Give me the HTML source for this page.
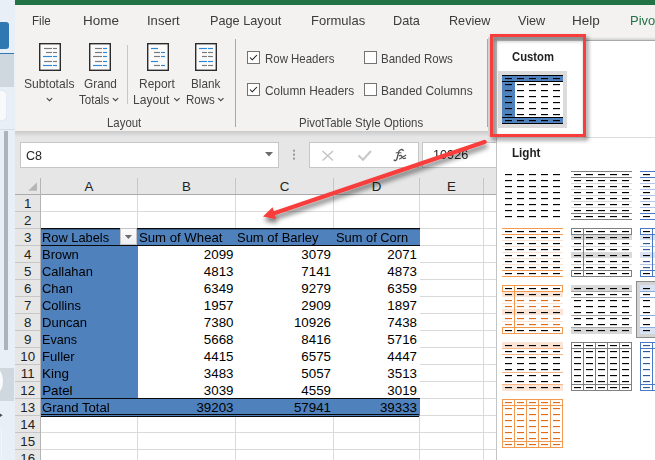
<!DOCTYPE html>
<html><head><meta charset="utf-8"><style>
html,body{margin:0;padding:0;}
body{width:655px;height:460px;overflow:hidden;position:relative;font-family:"Liberation Sans", sans-serif;background:#fff;}
</style></head><body>
<div style="position:absolute;left:0px;top:0px;width:15px;height:460px;background:#e8eff6"></div>
<div style="position:absolute;left:-4px;top:22px;width:13px;height:27px;background:#2f78b2;border-radius:3px"></div>
<div style="position:absolute;left:0px;top:52.5px;width:14px;height:1.5px;background:#2f78b2"></div>
<div style="position:absolute;left:0px;top:54px;width:14px;height:33px;background:#cfd8df"></div>
<div style="position:absolute;left:-6px;top:91px;width:12px;height:29px;background:#f7f9fb;border-radius:3px;box-shadow:0 0 1px #c0c8d0"></div>
<div style="position:absolute;left:0px;top:129px;width:15px;height:1px;background:#d5dde5"></div>
<div style="position:absolute;left:4px;top:131px;width:4px;height:219px;background:#aab4bc"></div>
<div style="position:absolute;left:0px;top:368px;width:14px;height:33px;background:#cfd8df"></div>
<div style="position:absolute;left:-10px;top:369px;width:13px;height:24px;background:#f7f9fb;border-radius:50%"></div>
<svg width="655" height="460" style="position:absolute;left:0;top:0"><polygon points="0,413.6 2.6,415.2 0,416.9" fill="#4a4a4a"/></svg>
<div style="position:absolute;left:1px;top:427px;width:1px;height:33px;background:#f3f6f9"></div>
<div style="position:absolute;left:15px;top:0px;width:640px;height:5px;background:#217346"></div>
<div style="position:absolute;left:15px;top:5px;width:640px;height:126px;background:#f3f2f1"></div>
<div style="position:absolute;left:15px;top:130.5px;width:640px;height:6px;background:linear-gradient(#c9c9c9,#e6e6e6)"></div>
<div style="position:absolute;left:31.98px;top:14.59px;font-size:12.6px;line-height:1;color:#3b3b3b;font-weight:400;white-space:nowrap;transform:scaleX(0.9211);transform-origin:0 0;">File</div>
<div style="position:absolute;left:83.13px;top:14.59px;font-size:12.6px;line-height:1;color:#3b3b3b;font-weight:400;white-space:nowrap;transform:scaleX(1.0719);transform-origin:0 0;">Home</div>
<div style="position:absolute;left:146.96px;top:14.59px;font-size:12.6px;line-height:1;color:#3b3b3b;font-weight:400;white-space:nowrap;transform:scaleX(1.0355);transform-origin:0 0;">Insert</div>
<div style="position:absolute;left:210.39px;top:14.59px;font-size:12.6px;line-height:1;color:#3b3b3b;font-weight:400;white-space:nowrap;transform:scaleX(1.0086);transform-origin:0 0;">Page Layout</div>
<div style="position:absolute;left:311.17px;top:14.59px;font-size:12.6px;line-height:1;color:#3b3b3b;font-weight:400;white-space:nowrap;transform:scaleX(1.0333);transform-origin:0 0;">Formulas</div>
<div style="position:absolute;left:393.19px;top:14.59px;font-size:12.6px;line-height:1;color:#3b3b3b;font-weight:400;white-space:nowrap;transform:scaleX(1.0115);transform-origin:0 0;">Data</div>
<div style="position:absolute;left:448.80px;top:14.59px;font-size:12.6px;line-height:1;color:#3b3b3b;font-weight:400;white-space:nowrap;transform:scaleX(1.0025);transform-origin:0 0;">Review</div>
<div style="position:absolute;left:517.80px;top:14.59px;font-size:12.6px;line-height:1;color:#3b3b3b;font-weight:400;white-space:nowrap;transform:scaleX(1.0074);transform-origin:0 0;">View</div>
<div style="position:absolute;left:571.82px;top:14.59px;font-size:12.6px;line-height:1;color:#3b3b3b;font-weight:400;white-space:nowrap;transform:scaleX(1.0760);transform-origin:0 0;">Help</div>
<div style="position:absolute;left:630.27px;top:14.59px;font-size:12.6px;line-height:1;color:#217346;font-weight:400;white-space:nowrap;transform:scaleX(1.0288);transform-origin:0 0;">PivotTable Analyze</div>
<svg width="655" height="460" style="position:absolute;left:0;top:0"><rect x="39" y="43" width="22" height="28" fill="#2b2b2b"/><rect x="40.4" y="44.4" width="19.2" height="25.2" fill="#fbfbfb"/><line x1="44" y1="48.5" x2="52" y2="48.5" stroke="#7a7a7a" stroke-width="1.15"/><line x1="53" y1="48.5" x2="57" y2="48.5" stroke="#7a7a7a" stroke-width="1.15"/><line x1="46" y1="52.5" x2="52" y2="52.5" stroke="#7a7a7a" stroke-width="1.15"/><line x1="53" y1="52.5" x2="57" y2="52.5" stroke="#7a7a7a" stroke-width="1.15"/><line x1="43" y1="56.5" x2="52" y2="56.5" stroke="#2b88d8" stroke-width="1.15"/><line x1="53" y1="56.5" x2="57" y2="56.5" stroke="#2b88d8" stroke-width="1.15"/><line x1="44" y1="61.5" x2="52" y2="61.5" stroke="#7a7a7a" stroke-width="1.15"/><line x1="53" y1="61.5" x2="57" y2="61.5" stroke="#7a7a7a" stroke-width="1.15"/><line x1="43" y1="65.5" x2="52" y2="65.5" stroke="#2b88d8" stroke-width="1.15"/><line x1="53" y1="65.5" x2="57" y2="65.5" stroke="#2b88d8" stroke-width="1.15"/><rect x="89" y="43" width="22" height="28" fill="#2b2b2b"/><rect x="90.4" y="44.4" width="19.2" height="25.2" fill="#fbfbfb"/><line x1="95" y1="48.5" x2="102" y2="48.5" stroke="#7a7a7a" stroke-width="1.15"/><line x1="103" y1="48.5" x2="107" y2="48.5" stroke="#2b88d8" stroke-width="1.15"/><line x1="95" y1="52.5" x2="102" y2="52.5" stroke="#7a7a7a" stroke-width="1.15"/><line x1="103" y1="52.5" x2="107" y2="52.5" stroke="#2b88d8" stroke-width="1.15"/><line x1="93" y1="56.5" x2="102" y2="56.5" stroke="#7a7a7a" stroke-width="1.15"/><line x1="103" y1="56.5" x2="107" y2="56.5" stroke="#2b88d8" stroke-width="1.15"/><line x1="95" y1="61.5" x2="102" y2="61.5" stroke="#7a7a7a" stroke-width="1.15"/><line x1="103" y1="61.5" x2="107" y2="61.5" stroke="#2b88d8" stroke-width="1.15"/><line x1="93" y1="65.5" x2="102" y2="65.5" stroke="#2b88d8" stroke-width="1.15"/><line x1="103" y1="65.5" x2="107" y2="65.5" stroke="#2b88d8" stroke-width="1.15"/><rect x="147" y="43" width="22" height="28" fill="#2b2b2b"/><rect x="148.4" y="44.4" width="19.2" height="25.2" fill="#fbfbfb"/><line x1="151" y1="48.5" x2="158" y2="48.5" stroke="#2b88d8" stroke-width="1.15"/><line x1="154" y1="52.5" x2="160" y2="52.5" stroke="#7a7a7a" stroke-width="1.15"/><line x1="161" y1="52.5" x2="165" y2="52.5" stroke="#2b88d8" stroke-width="1.15"/><line x1="154" y1="56.5" x2="160" y2="56.5" stroke="#7a7a7a" stroke-width="1.15"/><line x1="161" y1="56.5" x2="165" y2="56.5" stroke="#2b88d8" stroke-width="1.15"/><line x1="151" y1="61.5" x2="158" y2="61.5" stroke="#2b88d8" stroke-width="1.15"/><line x1="154" y1="65.5" x2="160" y2="65.5" stroke="#7a7a7a" stroke-width="1.15"/><line x1="161" y1="65.5" x2="165" y2="65.5" stroke="#2b88d8" stroke-width="1.15"/><rect x="195" y="43" width="22" height="28" fill="#2b2b2b"/><rect x="196.4" y="44.4" width="19.2" height="25.2" fill="#fbfbfb"/><line x1="199" y1="48.5" x2="207" y2="48.5" stroke="#2b88d8" stroke-width="1.15"/><line x1="208" y1="48.5" x2="213" y2="48.5" stroke="#2b88d8" stroke-width="1.15"/><line x1="202" y1="52.5" x2="207" y2="52.5" stroke="#7a7a7a" stroke-width="1.15"/><line x1="208" y1="52.5" x2="213" y2="52.5" stroke="#7a7a7a" stroke-width="1.15"/><line x1="202" y1="56.5" x2="207" y2="56.5" stroke="#7a7a7a" stroke-width="1.15"/><line x1="208" y1="56.5" x2="213" y2="56.5" stroke="#7a7a7a" stroke-width="1.15"/><line x1="199" y1="61.5" x2="207" y2="61.5" stroke="#2b88d8" stroke-width="1.15"/><line x1="208" y1="61.5" x2="213" y2="61.5" stroke="#2b88d8" stroke-width="1.15"/><line x1="202" y1="65.5" x2="207" y2="65.5" stroke="#7a7a7a" stroke-width="1.15"/><line x1="208" y1="65.5" x2="213" y2="65.5" stroke="#7a7a7a" stroke-width="1.15"/></svg>
<div style="position:absolute;left:24.04px;top:77.59px;font-size:12.6px;line-height:1;color:#444;font-weight:400;white-space:nowrap;transform:scaleX(0.9608);transform-origin:0 0;">Subtotals</div>
<svg width="655" height="460" style="position:absolute;left:0;top:0"><polyline points="46.8,98.10000000000001 49.5,100.7 52.2,98.10000000000001" fill="none" stroke="#444" stroke-width="1.1"/></svg>
<div style="position:absolute;left:83.56px;top:77.59px;font-size:12.6px;line-height:1;color:#444;font-weight:400;white-space:nowrap;transform:scaleX(0.9394);transform-origin:0 0;">Grand</div>
<div style="position:absolute;left:79.20px;top:94.09px;font-size:12.6px;line-height:1;color:#444;font-weight:400;white-space:nowrap;transform:scaleX(0.9187);transform-origin:0 0;">Totals</div>
<svg width="655" height="460" style="position:absolute;left:0;top:0"><polyline points="112.8,98.10000000000001 115.5,100.7 118.2,98.10000000000001" fill="none" stroke="#444" stroke-width="1.1"/></svg>
<div style="position:absolute;left:139.05px;top:77.59px;font-size:12.6px;line-height:1;color:#444;font-weight:400;white-space:nowrap;transform:scaleX(0.9486);transform-origin:0 0;">Report</div>
<div style="position:absolute;left:133.34px;top:94.09px;font-size:12.6px;line-height:1;color:#444;font-weight:400;white-space:nowrap;transform:scaleX(0.9595);transform-origin:0 0;">Layout</div>
<svg width="655" height="460" style="position:absolute;left:0;top:0"><polyline points="174.20000000000002,98.10000000000001 176.9,100.7 179.6,98.10000000000001" fill="none" stroke="#444" stroke-width="1.1"/></svg>
<div style="position:absolute;left:190.67px;top:77.59px;font-size:12.6px;line-height:1;color:#444;font-weight:400;white-space:nowrap;transform:scaleX(0.9300);transform-origin:0 0;">Blank</div>
<div style="position:absolute;left:185.69px;top:94.09px;font-size:12.6px;line-height:1;color:#444;font-weight:400;white-space:nowrap;transform:scaleX(0.9133);transform-origin:0 0;">Rows</div>
<svg width="655" height="460" style="position:absolute;left:0;top:0"><polyline points="218.10000000000002,98.10000000000001 220.8,100.7 223.5,98.10000000000001" fill="none" stroke="#444" stroke-width="1.1"/></svg>
<div style="position:absolute;left:107.49px;top:116.69px;font-size:12.6px;line-height:1;color:#444;font-weight:400;white-space:nowrap;transform:scaleX(0.9054);transform-origin:0 0;">Layout</div>
<div style="position:absolute;left:127px;top:45px;width:1px;height:59px;background:#c6c6c6"></div>
<div style="position:absolute;left:235px;top:39px;width:1px;height:88px;background:#a8a8a8"></div>
<div style="position:absolute;left:487px;top:39px;width:1px;height:88px;background:#a8a8a8"></div>
<svg width="655" height="460" style="position:absolute;left:0;top:0"><rect x="247.5" y="51.5" width="12" height="12" fill="#fdfdfd" stroke="#737373" stroke-width="1"/><polyline points="250,57.5 252.3,59.8 257,55" fill="none" stroke="#1e1e1e" stroke-width="1.05"/><rect x="247.5" y="83.5" width="12" height="12" fill="#fdfdfd" stroke="#737373" stroke-width="1"/><polyline points="250,89.5 252.3,91.8 257,87" fill="none" stroke="#1e1e1e" stroke-width="1.05"/><rect x="364.5" y="51.5" width="12" height="12" fill="#fdfdfd" stroke="#737373" stroke-width="1"/><rect x="364.5" y="83.5" width="12" height="12" fill="#fdfdfd" stroke="#737373" stroke-width="1"/></svg>
<div style="position:absolute;left:264.59px;top:52.59px;font-size:12.6px;line-height:1;color:#444;font-weight:400;white-space:nowrap;transform:scaleX(0.9093);transform-origin:0 0;">Row Headers</div>
<div style="position:absolute;left:264.66px;top:85.19px;font-size:12.6px;line-height:1;color:#444;font-weight:400;white-space:nowrap;transform:scaleX(0.9441);transform-origin:0 0;">Column Headers</div>
<div style="position:absolute;left:381.48px;top:52.59px;font-size:12.6px;line-height:1;color:#444;font-weight:400;white-space:nowrap;transform:scaleX(0.9156);transform-origin:0 0;">Banded Rows</div>
<div style="position:absolute;left:381.45px;top:85.19px;font-size:12.6px;line-height:1;color:#444;font-weight:400;white-space:nowrap;transform:scaleX(0.9484);transform-origin:0 0;">Banded Columns</div>
<div style="position:absolute;left:298.59px;top:116.69px;font-size:12.6px;line-height:1;color:#444;font-weight:400;white-space:nowrap;transform:scaleX(0.9096);transform-origin:0 0;">PivotTable Style Options</div>
<div style="position:absolute;left:15px;top:136.5px;width:640px;height:42px;background:#e6e6e6"></div>
<div style="position:absolute;left:20px;top:142px;width:259px;height:25.5px;background:#fff;box-sizing:border-box;border:1px solid #c6c6c6"></div>
<div style="position:absolute;left:26.22px;top:149.62px;font-size:12.8px;line-height:1;color:#262626;font-weight:400;white-space:nowrap;transform:scaleX(0.9800);transform-origin:0 0;">C8</div>
<svg width="655" height="460" style="position:absolute;left:0;top:0"><polygon points="265,152 273,152 269,156.5" fill="#6b6b6b"/><rect x="293" y="149.7" width="2" height="2" fill="#9a9a9a"/><rect x="293" y="153.6" width="2" height="2" fill="#9a9a9a"/><rect x="293" y="157.6" width="2" height="2" fill="#9a9a9a"/></svg>
<div style="position:absolute;left:309px;top:142px;width:110px;height:25.5px;background:#fff;box-sizing:border-box;border:1px solid #c6c6c6"></div>
<div style="position:absolute;left:422px;top:142px;width:75px;height:25.5px;background:#fff;box-sizing:border-box;border:1px solid #c6c6c6"></div>
<svg width="655" height="460" style="position:absolute;left:0;top:0"><path d="M322.5,151 L333,160.5 M333,151 L322.5,160.5" stroke="#c4c4c4" stroke-width="1.5"/><polyline points="358.5,155.5 363,159.8 371,151" fill="none" stroke="#c8c8c8" stroke-width="2.2"/><g fill="none" stroke="#555" stroke-linecap="round"><path d="M403.2,150.4 C402,149 399.6,149.2 398.8,151.8 L397,158.6 C396.4,160.6 395.2,160.9 394.2,160.1" stroke-width="1.4"/><path d="M396.2,152.7 L401,152.7" stroke-width="1.1"/><path d="M399.4,155.6 C401.4,154.9 402,156.2 402.5,157.4 C403,158.7 404,158.8 405.6,158.1" stroke-width="1.2"/><path d="M405.8,155.3 L399.6,158.9" stroke-width="1.2"/></g></svg>
<div style="position:absolute;left:433.39px;top:149.39px;font-size:12.6px;line-height:1;color:#262626;font-weight:400;white-space:nowrap;transform:scaleX(1.0059);transform-origin:0 0;">10926</div>
<div style="position:absolute;left:15px;top:178px;width:640px;height:16px;background:#e6e6e6"></div>
<div style="position:absolute;left:15px;top:195px;width:25px;height:265px;background:#e6e6e6"></div>
<div style="position:absolute;left:41px;top:195px;width:614px;height:265px;background:#fff"></div>
<svg width="655" height="460" style="position:absolute;left:0;top:0"><rect x="41" y="211" width="614" height="1" fill="#dadada"/><rect x="15" y="211" width="25" height="1" fill="#c6c6c6"/><rect x="41" y="228" width="614" height="1" fill="#dadada"/><rect x="15" y="228" width="25" height="1" fill="#c6c6c6"/><rect x="41" y="245" width="614" height="1" fill="#dadada"/><rect x="15" y="245" width="25" height="1" fill="#c6c6c6"/><rect x="41" y="262" width="614" height="1" fill="#dadada"/><rect x="15" y="262" width="25" height="1" fill="#c6c6c6"/><rect x="41" y="279" width="614" height="1" fill="#dadada"/><rect x="15" y="279" width="25" height="1" fill="#c6c6c6"/><rect x="41" y="296" width="614" height="1" fill="#dadada"/><rect x="15" y="296" width="25" height="1" fill="#c6c6c6"/><rect x="41" y="313" width="614" height="1" fill="#dadada"/><rect x="15" y="313" width="25" height="1" fill="#c6c6c6"/><rect x="41" y="330" width="614" height="1" fill="#dadada"/><rect x="15" y="330" width="25" height="1" fill="#c6c6c6"/><rect x="41" y="347" width="614" height="1" fill="#dadada"/><rect x="15" y="347" width="25" height="1" fill="#c6c6c6"/><rect x="41" y="364" width="614" height="1" fill="#dadada"/><rect x="15" y="364" width="25" height="1" fill="#c6c6c6"/><rect x="41" y="381" width="614" height="1" fill="#dadada"/><rect x="15" y="381" width="25" height="1" fill="#c6c6c6"/><rect x="41" y="398" width="614" height="1" fill="#dadada"/><rect x="15" y="398" width="25" height="1" fill="#c6c6c6"/><rect x="41" y="415" width="614" height="1" fill="#dadada"/><rect x="15" y="415" width="25" height="1" fill="#c6c6c6"/><rect x="41" y="432" width="614" height="1" fill="#dadada"/><rect x="15" y="432" width="25" height="1" fill="#c6c6c6"/><rect x="41" y="449" width="614" height="1" fill="#dadada"/><rect x="15" y="449" width="25" height="1" fill="#c6c6c6"/><rect x="41" y="466" width="614" height="1" fill="#dadada"/><rect x="15" y="466" width="25" height="1" fill="#c6c6c6"/><rect x="137" y="195" width="1" height="265" fill="#dadada"/><rect x="235" y="195" width="1" height="265" fill="#dadada"/><rect x="333" y="195" width="1" height="265" fill="#dadada"/><rect x="419" y="195" width="1" height="265" fill="#dadada"/><rect x="483" y="195" width="1" height="265" fill="#dadada"/><rect x="560" y="195" width="1" height="265" fill="#dadada"/><rect x="137" y="178" width="1" height="16" fill="#c6c6c6"/><rect x="235" y="178" width="1" height="16" fill="#c6c6c6"/><rect x="333" y="178" width="1" height="16" fill="#c6c6c6"/><rect x="419" y="178" width="1" height="16" fill="#c6c6c6"/><rect x="483" y="178" width="1" height="16" fill="#c6c6c6"/><rect x="560" y="178" width="1" height="16" fill="#c6c6c6"/><rect x="15" y="194" width="640" height="1" fill="#ababab"/><rect x="40" y="178" width="1" height="282" fill="#b4b4b4"/><polygon points="28.2,190.8 37,190.8 37,182.2" fill="#b6b6b6"/></svg>
<div style="position:absolute;left:-11.0px;width:200px;top:179.59px;font-size:13.3px;line-height:1;color:#222;font-weight:400;white-space:nowrap;text-align:center;">A</div>
<div style="position:absolute;left:86.5px;width:200px;top:179.59px;font-size:13.3px;line-height:1;color:#222;font-weight:400;white-space:nowrap;text-align:center;">B</div>
<div style="position:absolute;left:184.5px;width:200px;top:179.59px;font-size:13.3px;line-height:1;color:#222;font-weight:400;white-space:nowrap;text-align:center;">C</div>
<div style="position:absolute;left:276.5px;width:200px;top:179.59px;font-size:13.3px;line-height:1;color:#222;font-weight:400;white-space:nowrap;text-align:center;">D</div>
<div style="position:absolute;left:351.5px;width:200px;top:179.59px;font-size:13.3px;line-height:1;color:#222;font-weight:400;white-space:nowrap;text-align:center;">E</div>
<div style="position:absolute;left:-72.3px;width:200px;top:197.29px;font-size:13.3px;line-height:1;color:#222;font-weight:400;white-space:nowrap;text-align:center;">1</div>
<div style="position:absolute;left:-72.3px;width:200px;top:214.29px;font-size:13.3px;line-height:1;color:#222;font-weight:400;white-space:nowrap;text-align:center;">2</div>
<div style="position:absolute;left:-72.3px;width:200px;top:231.29px;font-size:13.3px;line-height:1;color:#222;font-weight:400;white-space:nowrap;text-align:center;">3</div>
<div style="position:absolute;left:-72.3px;width:200px;top:248.30px;font-size:13.3px;line-height:1;color:#222;font-weight:400;white-space:nowrap;text-align:center;">4</div>
<div style="position:absolute;left:-72.3px;width:200px;top:265.30px;font-size:13.3px;line-height:1;color:#222;font-weight:400;white-space:nowrap;text-align:center;">5</div>
<div style="position:absolute;left:-72.3px;width:200px;top:282.30px;font-size:13.3px;line-height:1;color:#222;font-weight:400;white-space:nowrap;text-align:center;">6</div>
<div style="position:absolute;left:-72.3px;width:200px;top:299.30px;font-size:13.3px;line-height:1;color:#222;font-weight:400;white-space:nowrap;text-align:center;">7</div>
<div style="position:absolute;left:-72.3px;width:200px;top:316.30px;font-size:13.3px;line-height:1;color:#222;font-weight:400;white-space:nowrap;text-align:center;">8</div>
<div style="position:absolute;left:-72.3px;width:200px;top:333.30px;font-size:13.3px;line-height:1;color:#222;font-weight:400;white-space:nowrap;text-align:center;">9</div>
<div style="position:absolute;left:-72.3px;width:200px;top:350.30px;font-size:13.3px;line-height:1;color:#222;font-weight:400;white-space:nowrap;text-align:center;">10</div>
<div style="position:absolute;left:-72.3px;width:200px;top:367.30px;font-size:13.3px;line-height:1;color:#222;font-weight:400;white-space:nowrap;text-align:center;">11</div>
<div style="position:absolute;left:-72.3px;width:200px;top:384.30px;font-size:13.3px;line-height:1;color:#222;font-weight:400;white-space:nowrap;text-align:center;">12</div>
<div style="position:absolute;left:-72.3px;width:200px;top:401.30px;font-size:13.3px;line-height:1;color:#222;font-weight:400;white-space:nowrap;text-align:center;">13</div>
<div style="position:absolute;left:-72.3px;width:200px;top:418.30px;font-size:13.3px;line-height:1;color:#222;font-weight:400;white-space:nowrap;text-align:center;">14</div>
<div style="position:absolute;left:-72.3px;width:200px;top:435.30px;font-size:13.3px;line-height:1;color:#222;font-weight:400;white-space:nowrap;text-align:center;">15</div>
<div style="position:absolute;left:-72.3px;width:200px;top:452.30px;font-size:13.3px;line-height:1;color:#222;font-weight:400;white-space:nowrap;text-align:center;">16</div>
<svg width="655" height="460" style="position:absolute;left:0;top:0"><rect x="41" y="228" width="379" height="17" fill="#4f81bd"/><rect x="41" y="245" width="97" height="153" fill="#4f81bd"/><rect x="41" y="398" width="379" height="18" fill="#4f81bd"/><rect x="41" y="228" width="379" height="1.3" fill="#0a0a0a"/><rect x="41" y="245" width="379" height="1" fill="#0a0a0a"/><rect x="138" y="246" width="282" height="152" fill="#fff"/><rect x="41" y="398" width="379" height="1" fill="#0a0a0a"/><rect x="41" y="414" width="378" height="1" fill="#0a0a0a"/><rect x="41" y="416" width="378" height="1" fill="#0a0a0a"/><rect x="419" y="416" width="1" height="1" fill="#dadada"/></svg>
<div style="position:absolute;left:120px;top:228px;width:17px;height:17px;box-sizing:border-box;border:1px solid #c4c4c4;background:linear-gradient(#fbfbfc,#eceff3)"></div>
<svg width="655" height="460" style="position:absolute;left:0;top:0"><polygon points="124.8,235 132,235 128.4,239.1" fill="#6b6b6b"/></svg>
<div style="position:absolute;left:42.44px;top:230.97px;font-size:13.33px;line-height:1;color:#000;font-weight:400;white-space:nowrap;transform:scaleX(0.9632);transform-origin:0 0;">Row Labels</div>
<div style="position:absolute;left:139.41px;top:230.97px;font-size:13.33px;line-height:1;color:#000;font-weight:400;white-space:nowrap;transform:scaleX(0.9880);transform-origin:0 0;">Sum of Wheat</div>
<div style="position:absolute;left:237.43px;top:230.97px;font-size:13.33px;line-height:1;color:#000;font-weight:400;white-space:nowrap;transform:scaleX(0.9735);transform-origin:0 0;">Sum of Barley</div>
<div style="position:absolute;left:335.54px;top:230.97px;font-size:13.33px;line-height:1;color:#000;font-weight:400;white-space:nowrap;transform:scaleX(0.9644);transform-origin:0 0;">Sum of Corn</div>
<div style="position:absolute;left:42.23px;top:248.17px;font-size:13.33px;line-height:1;color:#000;font-weight:400;white-space:nowrap;transform:scaleX(0.9750);transform-origin:0 0;">Brown</div>
<div style="position:absolute;right:421.5px;top:247.87px;font-size:13.33px;line-height:1;color:#000;font-weight:400;white-space:nowrap;text-align:right;">2099</div>
<div style="position:absolute;right:324px;top:247.87px;font-size:13.33px;line-height:1;color:#000;font-weight:400;white-space:nowrap;text-align:right;">3079</div>
<div style="position:absolute;right:238px;top:247.87px;font-size:13.33px;line-height:1;color:#000;font-weight:400;white-space:nowrap;text-align:right;">2071</div>
<div style="position:absolute;left:42.23px;top:265.17px;font-size:13.33px;line-height:1;color:#000;font-weight:400;white-space:nowrap;transform:scaleX(0.9667);transform-origin:0 0;">Callahan</div>
<div style="position:absolute;right:421.5px;top:264.87px;font-size:13.33px;line-height:1;color:#000;font-weight:400;white-space:nowrap;text-align:right;">4813</div>
<div style="position:absolute;right:324px;top:264.87px;font-size:13.33px;line-height:1;color:#000;font-weight:400;white-space:nowrap;text-align:right;">7141</div>
<div style="position:absolute;right:238px;top:264.87px;font-size:13.33px;line-height:1;color:#000;font-weight:400;white-space:nowrap;text-align:right;">4873</div>
<div style="position:absolute;left:42.23px;top:282.17px;font-size:13.33px;line-height:1;color:#000;font-weight:400;white-space:nowrap;transform:scaleX(0.9667);transform-origin:0 0;">Chan</div>
<div style="position:absolute;right:421.5px;top:281.87px;font-size:13.33px;line-height:1;color:#000;font-weight:400;white-space:nowrap;text-align:right;">6349</div>
<div style="position:absolute;right:324px;top:281.87px;font-size:13.33px;line-height:1;color:#000;font-weight:400;white-space:nowrap;text-align:right;">9279</div>
<div style="position:absolute;right:238px;top:281.87px;font-size:13.33px;line-height:1;color:#000;font-weight:400;white-space:nowrap;text-align:right;">6359</div>
<div style="position:absolute;left:42.23px;top:299.17px;font-size:13.33px;line-height:1;color:#000;font-weight:400;white-space:nowrap;transform:scaleX(0.9718);transform-origin:0 0;">Collins</div>
<div style="position:absolute;right:421.5px;top:298.87px;font-size:13.33px;line-height:1;color:#000;font-weight:400;white-space:nowrap;text-align:right;">1957</div>
<div style="position:absolute;right:324px;top:298.87px;font-size:13.33px;line-height:1;color:#000;font-weight:400;white-space:nowrap;text-align:right;">2909</div>
<div style="position:absolute;right:238px;top:298.87px;font-size:13.33px;line-height:1;color:#000;font-weight:400;white-space:nowrap;text-align:right;">1897</div>
<div style="position:absolute;left:42.22px;top:316.17px;font-size:13.33px;line-height:1;color:#000;font-weight:400;white-space:nowrap;transform:scaleX(0.9818);transform-origin:0 0;">Duncan</div>
<div style="position:absolute;right:421.5px;top:315.87px;font-size:13.33px;line-height:1;color:#000;font-weight:400;white-space:nowrap;text-align:right;">7380</div>
<div style="position:absolute;right:324px;top:315.87px;font-size:13.33px;line-height:1;color:#000;font-weight:400;white-space:nowrap;text-align:right;">10926</div>
<div style="position:absolute;right:238px;top:315.87px;font-size:13.33px;line-height:1;color:#000;font-weight:400;white-space:nowrap;text-align:right;">7438</div>
<div style="position:absolute;left:42.26px;top:333.17px;font-size:13.33px;line-height:1;color:#000;font-weight:400;white-space:nowrap;transform:scaleX(0.9444);transform-origin:0 0;">Evans</div>
<div style="position:absolute;right:421.5px;top:332.87px;font-size:13.33px;line-height:1;color:#000;font-weight:400;white-space:nowrap;text-align:right;">5668</div>
<div style="position:absolute;right:324px;top:332.87px;font-size:13.33px;line-height:1;color:#000;font-weight:400;white-space:nowrap;text-align:right;">8416</div>
<div style="position:absolute;right:238px;top:332.87px;font-size:13.33px;line-height:1;color:#000;font-weight:400;white-space:nowrap;text-align:right;">5716</div>
<div style="position:absolute;left:42.22px;top:350.17px;font-size:13.33px;line-height:1;color:#000;font-weight:400;white-space:nowrap;transform:scaleX(0.9812);transform-origin:0 0;">Fuller</div>
<div style="position:absolute;right:421.5px;top:349.87px;font-size:13.33px;line-height:1;color:#000;font-weight:400;white-space:nowrap;text-align:right;">4415</div>
<div style="position:absolute;right:324px;top:349.87px;font-size:13.33px;line-height:1;color:#000;font-weight:400;white-space:nowrap;text-align:right;">6575</div>
<div style="position:absolute;right:238px;top:349.87px;font-size:13.33px;line-height:1;color:#000;font-weight:400;white-space:nowrap;text-align:right;">4447</div>
<div style="position:absolute;left:42.19px;top:367.17px;font-size:13.33px;line-height:1;color:#000;font-weight:400;white-space:nowrap;transform:scaleX(1.0120);transform-origin:0 0;">King</div>
<div style="position:absolute;right:421.5px;top:366.87px;font-size:13.33px;line-height:1;color:#000;font-weight:400;white-space:nowrap;text-align:right;">3483</div>
<div style="position:absolute;right:324px;top:366.87px;font-size:13.33px;line-height:1;color:#000;font-weight:400;white-space:nowrap;text-align:right;">5057</div>
<div style="position:absolute;right:238px;top:366.87px;font-size:13.33px;line-height:1;color:#000;font-weight:400;white-space:nowrap;text-align:right;">3513</div>
<div style="position:absolute;left:42.20px;top:384.17px;font-size:13.33px;line-height:1;color:#000;font-weight:400;white-space:nowrap;transform:scaleX(1.0000);transform-origin:0 0;">Patel</div>
<div style="position:absolute;right:421.5px;top:383.87px;font-size:13.33px;line-height:1;color:#000;font-weight:400;white-space:nowrap;text-align:right;">3039</div>
<div style="position:absolute;right:324px;top:383.87px;font-size:13.33px;line-height:1;color:#000;font-weight:400;white-space:nowrap;text-align:right;">4559</div>
<div style="position:absolute;right:238px;top:383.87px;font-size:13.33px;line-height:1;color:#000;font-weight:400;white-space:nowrap;text-align:right;">3019</div>
<div style="position:absolute;left:42.21px;top:401.17px;font-size:13.33px;line-height:1;color:#000;font-weight:400;white-space:nowrap;transform:scaleX(0.9851);transform-origin:0 0;">Grand Total</div>
<div style="position:absolute;right:421.5px;top:400.87px;font-size:13.33px;line-height:1;color:#000;font-weight:400;white-space:nowrap;text-align:right;">39203</div>
<div style="position:absolute;right:324px;top:400.87px;font-size:13.33px;line-height:1;color:#000;font-weight:400;white-space:nowrap;text-align:right;">57941</div>
<div style="position:absolute;right:238px;top:400.87px;font-size:13.33px;line-height:1;color:#000;font-weight:400;white-space:nowrap;text-align:right;">39333</div>
<div style="position:absolute;left:488px;top:37px;width:2px;height:99px;background:#d6dadc"></div>
<div style="position:absolute;left:493px;top:37px;width:4px;height:100px;background:#cbcbcb"></div>
<div style="position:absolute;left:493px;top:37px;width:162px;height:4px;background:linear-gradient(#bdbdbd,#c8c8c8)"></div>
<div style="position:absolute;left:586px;top:37px;width:69px;height:3px;background:linear-gradient(#f3f2f1,#d0d0d0)"></div>
<div style="position:absolute;left:586px;top:40px;width:69px;height:1px;background:#a9a9a9"></div>
<div style="position:absolute;left:496px;top:41px;width:1px;height:419px;background:#c4c4c4"></div>
<div style="position:absolute;left:497px;top:41px;width:158px;height:419px;background:#fff"></div>
<div style="position:absolute;left:512.20px;top:51.20px;font-size:12px;line-height:1;color:#1f1f1f;font-weight:700;white-space:nowrap;transform:scaleX(0.9386);transform-origin:0 0;">Custom</div>
<svg width="655" height="460" style="position:absolute;left:0;top:0"><rect x="498" y="71" width="69" height="57" fill="#dcdcdc"/><rect x="497" y="137" width="158" height="1" fill="#dcdcdc"/></svg>
<div style="position:absolute;left:511.73px;top:147.30px;font-size:12px;line-height:1;color:#1f1f1f;font-weight:700;white-space:nowrap;transform:scaleX(0.9714);transform-origin:0 0;">Light</div>
<svg width="655" height="460" style="position:absolute;left:0;top:0"><rect x="502" y="75" width="61" height="49" fill="#fff"/><rect x="502" y="75" width="61" height="6" fill="#4f81bd"/><rect x="502" y="81" width="13" height="36" fill="#4f81bd"/><rect x="502" y="117" width="61" height="7" fill="#4f81bd"/><rect x="502" y="75" width="61" height="1" fill="#000"/><rect x="502" y="81" width="61" height="1" fill="#000"/><rect x="502" y="117" width="61" height="1" fill="#000"/><rect x="502" y="123" width="61" height="1" fill="#000"/><rect x="505" y="78" width="7" height="1.15" fill="#000"/><rect x="517" y="78" width="7" height="1.15" fill="#000"/><rect x="529" y="78" width="7" height="1.15" fill="#000"/><rect x="541" y="78" width="7" height="1.15" fill="#000"/><rect x="553" y="78" width="7" height="1.15" fill="#000"/><rect x="505" y="84" width="7" height="1.15" fill="#000"/><rect x="517" y="84" width="7" height="1.15" fill="#000"/><rect x="529" y="84" width="7" height="1.15" fill="#000"/><rect x="541" y="84" width="7" height="1.15" fill="#000"/><rect x="553" y="84" width="7" height="1.15" fill="#000"/><rect x="505" y="90" width="7" height="1.15" fill="#000"/><rect x="517" y="90" width="7" height="1.15" fill="#000"/><rect x="529" y="90" width="7" height="1.15" fill="#000"/><rect x="541" y="90" width="7" height="1.15" fill="#000"/><rect x="553" y="90" width="7" height="1.15" fill="#000"/><rect x="505" y="96" width="7" height="1.15" fill="#000"/><rect x="517" y="96" width="7" height="1.15" fill="#000"/><rect x="529" y="96" width="7" height="1.15" fill="#000"/><rect x="541" y="96" width="7" height="1.15" fill="#000"/><rect x="553" y="96" width="7" height="1.15" fill="#000"/><rect x="505" y="102" width="7" height="1.15" fill="#000"/><rect x="517" y="102" width="7" height="1.15" fill="#000"/><rect x="529" y="102" width="7" height="1.15" fill="#000"/><rect x="541" y="102" width="7" height="1.15" fill="#000"/><rect x="553" y="102" width="7" height="1.15" fill="#000"/><rect x="505" y="108" width="7" height="1.15" fill="#000"/><rect x="517" y="108" width="7" height="1.15" fill="#000"/><rect x="529" y="108" width="7" height="1.15" fill="#000"/><rect x="541" y="108" width="7" height="1.15" fill="#000"/><rect x="553" y="108" width="7" height="1.15" fill="#000"/><rect x="505" y="114" width="7" height="1.15" fill="#000"/><rect x="517" y="114" width="7" height="1.15" fill="#000"/><rect x="529" y="114" width="7" height="1.15" fill="#000"/><rect x="541" y="114" width="7" height="1.15" fill="#000"/><rect x="553" y="114" width="7" height="1.15" fill="#000"/><rect x="505" y="120" width="7" height="1.15" fill="#000"/><rect x="517" y="120" width="7" height="1.15" fill="#000"/><rect x="529" y="120" width="7" height="1.15" fill="#000"/><rect x="541" y="120" width="7" height="1.15" fill="#000"/><rect x="553" y="120" width="7" height="1.15" fill="#000"/><rect x="505" y="174" width="7" height="1.15" fill="#000"/><rect x="517" y="174" width="7" height="1.15" fill="#000"/><rect x="529" y="174" width="7" height="1.15" fill="#000"/><rect x="541" y="174" width="7" height="1.15" fill="#000"/><rect x="553" y="174" width="7" height="1.15" fill="#000"/><rect x="505" y="180" width="7" height="1.15" fill="#000"/><rect x="517" y="180" width="7" height="1.15" fill="#000"/><rect x="529" y="180" width="7" height="1.15" fill="#000"/><rect x="541" y="180" width="7" height="1.15" fill="#000"/><rect x="553" y="180" width="7" height="1.15" fill="#000"/><rect x="505" y="186" width="7" height="1.15" fill="#000"/><rect x="517" y="186" width="7" height="1.15" fill="#000"/><rect x="529" y="186" width="7" height="1.15" fill="#000"/><rect x="541" y="186" width="7" height="1.15" fill="#000"/><rect x="553" y="186" width="7" height="1.15" fill="#000"/><rect x="505" y="192" width="7" height="1.15" fill="#000"/><rect x="517" y="192" width="7" height="1.15" fill="#000"/><rect x="529" y="192" width="7" height="1.15" fill="#000"/><rect x="541" y="192" width="7" height="1.15" fill="#000"/><rect x="553" y="192" width="7" height="1.15" fill="#000"/><rect x="505" y="198" width="7" height="1.15" fill="#000"/><rect x="517" y="198" width="7" height="1.15" fill="#000"/><rect x="529" y="198" width="7" height="1.15" fill="#000"/><rect x="541" y="198" width="7" height="1.15" fill="#000"/><rect x="553" y="198" width="7" height="1.15" fill="#000"/><rect x="505" y="204" width="7" height="1.15" fill="#000"/><rect x="517" y="204" width="7" height="1.15" fill="#000"/><rect x="529" y="204" width="7" height="1.15" fill="#000"/><rect x="541" y="204" width="7" height="1.15" fill="#000"/><rect x="553" y="204" width="7" height="1.15" fill="#000"/><rect x="505" y="210" width="7" height="1.15" fill="#000"/><rect x="517" y="210" width="7" height="1.15" fill="#000"/><rect x="529" y="210" width="7" height="1.15" fill="#000"/><rect x="541" y="210" width="7" height="1.15" fill="#000"/><rect x="553" y="210" width="7" height="1.15" fill="#000"/><rect x="505" y="216" width="7" height="1.15" fill="#000"/><rect x="517" y="216" width="7" height="1.15" fill="#000"/><rect x="529" y="216" width="7" height="1.15" fill="#000"/><rect x="541" y="216" width="7" height="1.15" fill="#000"/><rect x="553" y="216" width="7" height="1.15" fill="#000"/><rect x="571" y="171" width="61" height="1" fill="#808080"/><rect x="571" y="177" width="61" height="1" fill="#808080"/><rect x="571" y="213" width="61" height="1" fill="#808080"/><rect x="571" y="219" width="61" height="1" fill="#808080"/><rect x="571" y="183" width="61" height="1" fill="#d9d9d9"/><rect x="571" y="189" width="61" height="1" fill="#d9d9d9"/><rect x="571" y="195" width="61" height="1" fill="#d9d9d9"/><rect x="571" y="201" width="61" height="1" fill="#d9d9d9"/><rect x="571" y="207" width="61" height="1" fill="#d9d9d9"/><rect x="574" y="174" width="7" height="1.15" fill="#000"/><rect x="586" y="174" width="7" height="1.15" fill="#000"/><rect x="598" y="174" width="7" height="1.15" fill="#000"/><rect x="610" y="174" width="7" height="1.15" fill="#000"/><rect x="622" y="174" width="7" height="1.15" fill="#000"/><rect x="574" y="180" width="7" height="1.15" fill="#000"/><rect x="586" y="180" width="7" height="1.15" fill="#000"/><rect x="598" y="180" width="7" height="1.15" fill="#000"/><rect x="610" y="180" width="7" height="1.15" fill="#000"/><rect x="622" y="180" width="7" height="1.15" fill="#000"/><rect x="574" y="186" width="7" height="1.15" fill="#000"/><rect x="586" y="186" width="7" height="1.15" fill="#000"/><rect x="598" y="186" width="7" height="1.15" fill="#000"/><rect x="610" y="186" width="7" height="1.15" fill="#000"/><rect x="622" y="186" width="7" height="1.15" fill="#000"/><rect x="574" y="192" width="7" height="1.15" fill="#000"/><rect x="586" y="192" width="7" height="1.15" fill="#000"/><rect x="598" y="192" width="7" height="1.15" fill="#000"/><rect x="610" y="192" width="7" height="1.15" fill="#000"/><rect x="622" y="192" width="7" height="1.15" fill="#000"/><rect x="574" y="198" width="7" height="1.15" fill="#000"/><rect x="586" y="198" width="7" height="1.15" fill="#000"/><rect x="598" y="198" width="7" height="1.15" fill="#000"/><rect x="610" y="198" width="7" height="1.15" fill="#000"/><rect x="622" y="198" width="7" height="1.15" fill="#000"/><rect x="574" y="204" width="7" height="1.15" fill="#000"/><rect x="586" y="204" width="7" height="1.15" fill="#000"/><rect x="598" y="204" width="7" height="1.15" fill="#000"/><rect x="610" y="204" width="7" height="1.15" fill="#000"/><rect x="622" y="204" width="7" height="1.15" fill="#000"/><rect x="574" y="210" width="7" height="1.15" fill="#000"/><rect x="586" y="210" width="7" height="1.15" fill="#000"/><rect x="598" y="210" width="7" height="1.15" fill="#000"/><rect x="610" y="210" width="7" height="1.15" fill="#000"/><rect x="622" y="210" width="7" height="1.15" fill="#000"/><rect x="574" y="216" width="7" height="1.15" fill="#000"/><rect x="586" y="216" width="7" height="1.15" fill="#000"/><rect x="598" y="216" width="7" height="1.15" fill="#000"/><rect x="610" y="216" width="7" height="1.15" fill="#000"/><rect x="622" y="216" width="7" height="1.15" fill="#000"/><rect x="640" y="171" width="61" height="1" fill="#4a78c4"/><rect x="640" y="177" width="61" height="1" fill="#4a78c4"/><rect x="640" y="213" width="61" height="1" fill="#4a78c4"/><rect x="640" y="219" width="61" height="1" fill="#4a78c4"/><rect x="640" y="183" width="61" height="1" fill="#b4c6e7"/><rect x="640" y="189" width="61" height="1" fill="#b4c6e7"/><rect x="640" y="195" width="61" height="1" fill="#b4c6e7"/><rect x="640" y="201" width="61" height="1" fill="#b4c6e7"/><rect x="640" y="207" width="61" height="1" fill="#b4c6e7"/><rect x="643" y="174" width="7" height="1.15" fill="#000"/><rect x="655" y="174" width="7" height="1.15" fill="#000"/><rect x="667" y="174" width="7" height="1.15" fill="#000"/><rect x="679" y="174" width="7" height="1.15" fill="#000"/><rect x="691" y="174" width="7" height="1.15" fill="#000"/><rect x="643" y="180" width="7" height="1.15" fill="#000"/><rect x="655" y="180" width="7" height="1.15" fill="#000"/><rect x="667" y="180" width="7" height="1.15" fill="#000"/><rect x="679" y="180" width="7" height="1.15" fill="#000"/><rect x="691" y="180" width="7" height="1.15" fill="#000"/><rect x="643" y="186" width="7" height="1.15" fill="#000"/><rect x="655" y="186" width="7" height="1.15" fill="#000"/><rect x="667" y="186" width="7" height="1.15" fill="#000"/><rect x="679" y="186" width="7" height="1.15" fill="#000"/><rect x="691" y="186" width="7" height="1.15" fill="#000"/><rect x="643" y="192" width="7" height="1.15" fill="#000"/><rect x="655" y="192" width="7" height="1.15" fill="#000"/><rect x="667" y="192" width="7" height="1.15" fill="#000"/><rect x="679" y="192" width="7" height="1.15" fill="#000"/><rect x="691" y="192" width="7" height="1.15" fill="#000"/><rect x="643" y="198" width="7" height="1.15" fill="#000"/><rect x="655" y="198" width="7" height="1.15" fill="#000"/><rect x="667" y="198" width="7" height="1.15" fill="#000"/><rect x="679" y="198" width="7" height="1.15" fill="#000"/><rect x="691" y="198" width="7" height="1.15" fill="#000"/><rect x="643" y="204" width="7" height="1.15" fill="#000"/><rect x="655" y="204" width="7" height="1.15" fill="#000"/><rect x="667" y="204" width="7" height="1.15" fill="#000"/><rect x="679" y="204" width="7" height="1.15" fill="#000"/><rect x="691" y="204" width="7" height="1.15" fill="#000"/><rect x="643" y="210" width="7" height="1.15" fill="#000"/><rect x="655" y="210" width="7" height="1.15" fill="#000"/><rect x="667" y="210" width="7" height="1.15" fill="#000"/><rect x="679" y="210" width="7" height="1.15" fill="#000"/><rect x="691" y="210" width="7" height="1.15" fill="#000"/><rect x="643" y="216" width="7" height="1.15" fill="#000"/><rect x="655" y="216" width="7" height="1.15" fill="#000"/><rect x="667" y="216" width="7" height="1.15" fill="#000"/><rect x="679" y="216" width="7" height="1.15" fill="#000"/><rect x="691" y="216" width="7" height="1.15" fill="#000"/><rect x="502" y="228" width="61" height="1" fill="#f39a50"/><rect x="502" y="234" width="61" height="1" fill="#f39a50"/><rect x="502" y="270" width="61" height="1" fill="#f39a50"/><rect x="502" y="276" width="61" height="1" fill="#f39a50"/><rect x="502" y="240" width="61" height="1" fill="#fbe3d3"/><rect x="502" y="246" width="61" height="1" fill="#fbe3d3"/><rect x="502" y="252" width="61" height="1" fill="#fbe3d3"/><rect x="502" y="258" width="61" height="1" fill="#fbe3d3"/><rect x="502" y="264" width="61" height="1" fill="#fbe3d3"/><rect x="505" y="231" width="7" height="1.15" fill="#000"/><rect x="517" y="231" width="7" height="1.15" fill="#000"/><rect x="529" y="231" width="7" height="1.15" fill="#000"/><rect x="541" y="231" width="7" height="1.15" fill="#000"/><rect x="553" y="231" width="7" height="1.15" fill="#000"/><rect x="505" y="237" width="7" height="1.15" fill="#000"/><rect x="517" y="237" width="7" height="1.15" fill="#000"/><rect x="529" y="237" width="7" height="1.15" fill="#000"/><rect x="541" y="237" width="7" height="1.15" fill="#000"/><rect x="553" y="237" width="7" height="1.15" fill="#000"/><rect x="505" y="243" width="7" height="1.15" fill="#000"/><rect x="517" y="243" width="7" height="1.15" fill="#000"/><rect x="529" y="243" width="7" height="1.15" fill="#000"/><rect x="541" y="243" width="7" height="1.15" fill="#000"/><rect x="553" y="243" width="7" height="1.15" fill="#000"/><rect x="505" y="249" width="7" height="1.15" fill="#000"/><rect x="517" y="249" width="7" height="1.15" fill="#000"/><rect x="529" y="249" width="7" height="1.15" fill="#000"/><rect x="541" y="249" width="7" height="1.15" fill="#000"/><rect x="553" y="249" width="7" height="1.15" fill="#000"/><rect x="505" y="255" width="7" height="1.15" fill="#000"/><rect x="517" y="255" width="7" height="1.15" fill="#000"/><rect x="529" y="255" width="7" height="1.15" fill="#000"/><rect x="541" y="255" width="7" height="1.15" fill="#000"/><rect x="553" y="255" width="7" height="1.15" fill="#000"/><rect x="505" y="261" width="7" height="1.15" fill="#000"/><rect x="517" y="261" width="7" height="1.15" fill="#000"/><rect x="529" y="261" width="7" height="1.15" fill="#000"/><rect x="541" y="261" width="7" height="1.15" fill="#000"/><rect x="553" y="261" width="7" height="1.15" fill="#000"/><rect x="505" y="267" width="7" height="1.15" fill="#000"/><rect x="517" y="267" width="7" height="1.15" fill="#000"/><rect x="529" y="267" width="7" height="1.15" fill="#000"/><rect x="541" y="267" width="7" height="1.15" fill="#000"/><rect x="553" y="267" width="7" height="1.15" fill="#000"/><rect x="505" y="273" width="7" height="1.15" fill="#000"/><rect x="517" y="273" width="7" height="1.15" fill="#000"/><rect x="529" y="273" width="7" height="1.15" fill="#000"/><rect x="541" y="273" width="7" height="1.15" fill="#000"/><rect x="553" y="273" width="7" height="1.15" fill="#000"/><rect x="571" y="234" width="61" height="6" fill="#d9d9d9"/><rect x="571" y="252" width="61" height="6" fill="#d9d9d9"/><rect x="571" y="246" width="61" height="1" fill="#d9d9d9"/><rect x="571" y="264" width="61" height="1" fill="#d9d9d9"/><rect x="571.5" y="228.5" width="60" height="6" fill="none" stroke="#808080" stroke-width="1"/><rect x="571.5" y="270.5" width="60" height="6" fill="none" stroke="#808080" stroke-width="1"/><rect x="583" y="228" width="1" height="49" fill="#808080"/><rect x="574" y="231" width="7" height="1.15" fill="#000"/><rect x="586" y="231" width="7" height="1.15" fill="#000"/><rect x="598" y="231" width="7" height="1.15" fill="#000"/><rect x="610" y="231" width="7" height="1.15" fill="#000"/><rect x="622" y="231" width="7" height="1.15" fill="#000"/><rect x="574" y="237" width="7" height="1.15" fill="#000"/><rect x="586" y="237" width="7" height="1.15" fill="#000"/><rect x="598" y="237" width="7" height="1.15" fill="#000"/><rect x="610" y="237" width="7" height="1.15" fill="#000"/><rect x="622" y="237" width="7" height="1.15" fill="#000"/><rect x="574" y="255" width="7" height="1.15" fill="#000"/><rect x="586" y="255" width="7" height="1.15" fill="#000"/><rect x="598" y="255" width="7" height="1.15" fill="#000"/><rect x="610" y="255" width="7" height="1.15" fill="#000"/><rect x="622" y="255" width="7" height="1.15" fill="#000"/><rect x="574" y="273" width="7" height="1.15" fill="#000"/><rect x="586" y="273" width="7" height="1.15" fill="#000"/><rect x="598" y="273" width="7" height="1.15" fill="#000"/><rect x="610" y="273" width="7" height="1.15" fill="#000"/><rect x="622" y="273" width="7" height="1.15" fill="#000"/><rect x="574" y="243" width="7" height="1.15" fill="#000"/><rect x="586" y="243" width="7" height="1.15" fill="#000"/><rect x="598" y="243" width="7" height="1.15" fill="#000"/><rect x="610" y="243" width="7" height="1.15" fill="#000"/><rect x="622" y="243" width="7" height="1.15" fill="#000"/><rect x="574" y="249" width="7" height="1.15" fill="#000"/><rect x="586" y="249" width="7" height="1.15" fill="#000"/><rect x="598" y="249" width="7" height="1.15" fill="#000"/><rect x="610" y="249" width="7" height="1.15" fill="#000"/><rect x="622" y="249" width="7" height="1.15" fill="#000"/><rect x="574" y="261" width="7" height="1.15" fill="#000"/><rect x="586" y="261" width="7" height="1.15" fill="#000"/><rect x="598" y="261" width="7" height="1.15" fill="#000"/><rect x="610" y="261" width="7" height="1.15" fill="#000"/><rect x="622" y="261" width="7" height="1.15" fill="#000"/><rect x="574" y="267" width="7" height="1.15" fill="#000"/><rect x="586" y="267" width="7" height="1.15" fill="#000"/><rect x="598" y="267" width="7" height="1.15" fill="#000"/><rect x="610" y="267" width="7" height="1.15" fill="#000"/><rect x="622" y="267" width="7" height="1.15" fill="#000"/><rect x="640" y="234" width="61" height="6" fill="#dae3f3"/><rect x="640" y="252" width="61" height="6" fill="#dae3f3"/><rect x="640" y="246" width="61" height="1" fill="#b4c6e7"/><rect x="640" y="264" width="61" height="1" fill="#b4c6e7"/><rect x="640.5" y="228.5" width="60" height="6" fill="none" stroke="#4a78c4" stroke-width="1"/><rect x="640.5" y="270.5" width="60" height="6" fill="none" stroke="#4a78c4" stroke-width="1"/><rect x="652" y="228" width="1" height="49" fill="#4a78c4"/><rect x="643" y="231" width="7" height="1.15" fill="#000"/><rect x="655" y="231" width="7" height="1.15" fill="#000"/><rect x="667" y="231" width="7" height="1.15" fill="#000"/><rect x="679" y="231" width="7" height="1.15" fill="#000"/><rect x="691" y="231" width="7" height="1.15" fill="#000"/><rect x="643" y="237" width="7" height="1.15" fill="#000"/><rect x="655" y="237" width="7" height="1.15" fill="#000"/><rect x="667" y="237" width="7" height="1.15" fill="#000"/><rect x="679" y="237" width="7" height="1.15" fill="#000"/><rect x="691" y="237" width="7" height="1.15" fill="#000"/><rect x="643" y="255" width="7" height="1.15" fill="#000"/><rect x="655" y="255" width="7" height="1.15" fill="#000"/><rect x="667" y="255" width="7" height="1.15" fill="#000"/><rect x="679" y="255" width="7" height="1.15" fill="#000"/><rect x="691" y="255" width="7" height="1.15" fill="#000"/><rect x="643" y="273" width="7" height="1.15" fill="#000"/><rect x="655" y="273" width="7" height="1.15" fill="#000"/><rect x="667" y="273" width="7" height="1.15" fill="#000"/><rect x="679" y="273" width="7" height="1.15" fill="#000"/><rect x="691" y="273" width="7" height="1.15" fill="#000"/><rect x="643" y="243" width="7" height="1.15" fill="#2f5a9a"/><rect x="655" y="243" width="7" height="1.15" fill="#2f5a9a"/><rect x="667" y="243" width="7" height="1.15" fill="#2f5a9a"/><rect x="679" y="243" width="7" height="1.15" fill="#2f5a9a"/><rect x="691" y="243" width="7" height="1.15" fill="#2f5a9a"/><rect x="643" y="249" width="7" height="1.15" fill="#2f5a9a"/><rect x="655" y="249" width="7" height="1.15" fill="#2f5a9a"/><rect x="667" y="249" width="7" height="1.15" fill="#2f5a9a"/><rect x="679" y="249" width="7" height="1.15" fill="#2f5a9a"/><rect x="691" y="249" width="7" height="1.15" fill="#2f5a9a"/><rect x="643" y="261" width="7" height="1.15" fill="#2f5a9a"/><rect x="655" y="261" width="7" height="1.15" fill="#2f5a9a"/><rect x="667" y="261" width="7" height="1.15" fill="#2f5a9a"/><rect x="679" y="261" width="7" height="1.15" fill="#2f5a9a"/><rect x="691" y="261" width="7" height="1.15" fill="#2f5a9a"/><rect x="643" y="267" width="7" height="1.15" fill="#2f5a9a"/><rect x="655" y="267" width="7" height="1.15" fill="#2f5a9a"/><rect x="667" y="267" width="7" height="1.15" fill="#2f5a9a"/><rect x="679" y="267" width="7" height="1.15" fill="#2f5a9a"/><rect x="691" y="267" width="7" height="1.15" fill="#2f5a9a"/><rect x="502" y="291" width="61" height="6" fill="#fbe5d6"/><rect x="502" y="309" width="61" height="6" fill="#fbe5d6"/><rect x="502" y="303" width="61" height="1" fill="#fbe3d3"/><rect x="502" y="321" width="61" height="1" fill="#fbe3d3"/><rect x="502.5" y="285.5" width="60" height="6" fill="none" stroke="#f39a50" stroke-width="1"/><rect x="502.5" y="327.5" width="60" height="6" fill="none" stroke="#f39a50" stroke-width="1"/><rect x="514" y="285" width="1" height="49" fill="#f39a50"/><rect x="505" y="288" width="7" height="1.15" fill="#000"/><rect x="517" y="288" width="7" height="1.15" fill="#000"/><rect x="529" y="288" width="7" height="1.15" fill="#000"/><rect x="541" y="288" width="7" height="1.15" fill="#000"/><rect x="553" y="288" width="7" height="1.15" fill="#000"/><rect x="505" y="294" width="7" height="1.15" fill="#000"/><rect x="517" y="294" width="7" height="1.15" fill="#000"/><rect x="529" y="294" width="7" height="1.15" fill="#000"/><rect x="541" y="294" width="7" height="1.15" fill="#000"/><rect x="553" y="294" width="7" height="1.15" fill="#000"/><rect x="505" y="312" width="7" height="1.15" fill="#000"/><rect x="517" y="312" width="7" height="1.15" fill="#000"/><rect x="529" y="312" width="7" height="1.15" fill="#000"/><rect x="541" y="312" width="7" height="1.15" fill="#000"/><rect x="553" y="312" width="7" height="1.15" fill="#000"/><rect x="505" y="330" width="7" height="1.15" fill="#000"/><rect x="517" y="330" width="7" height="1.15" fill="#000"/><rect x="529" y="330" width="7" height="1.15" fill="#000"/><rect x="541" y="330" width="7" height="1.15" fill="#000"/><rect x="553" y="330" width="7" height="1.15" fill="#000"/><rect x="505" y="300" width="7" height="1.15" fill="#df6c16"/><rect x="517" y="300" width="7" height="1.15" fill="#df6c16"/><rect x="529" y="300" width="7" height="1.15" fill="#df6c16"/><rect x="541" y="300" width="7" height="1.15" fill="#df6c16"/><rect x="553" y="300" width="7" height="1.15" fill="#df6c16"/><rect x="505" y="306" width="7" height="1.15" fill="#df6c16"/><rect x="517" y="306" width="7" height="1.15" fill="#df6c16"/><rect x="529" y="306" width="7" height="1.15" fill="#df6c16"/><rect x="541" y="306" width="7" height="1.15" fill="#df6c16"/><rect x="553" y="306" width="7" height="1.15" fill="#df6c16"/><rect x="505" y="318" width="7" height="1.15" fill="#df6c16"/><rect x="517" y="318" width="7" height="1.15" fill="#df6c16"/><rect x="529" y="318" width="7" height="1.15" fill="#df6c16"/><rect x="541" y="318" width="7" height="1.15" fill="#df6c16"/><rect x="553" y="318" width="7" height="1.15" fill="#df6c16"/><rect x="505" y="324" width="7" height="1.15" fill="#df6c16"/><rect x="517" y="324" width="7" height="1.15" fill="#df6c16"/><rect x="529" y="324" width="7" height="1.15" fill="#df6c16"/><rect x="541" y="324" width="7" height="1.15" fill="#df6c16"/><rect x="553" y="324" width="7" height="1.15" fill="#df6c16"/><rect x="571" y="285" width="61" height="6" fill="#d9d9d9"/><rect x="571" y="327" width="61" height="7" fill="#d9d9d9"/><rect x="571" y="291" width="61" height="1" fill="#a6a6a6"/><rect x="571" y="327" width="61" height="1" fill="#a6a6a6"/><rect x="571" y="297" width="61" height="1" fill="#a6a6a6"/><rect x="571" y="315" width="61" height="1" fill="#a6a6a6"/><rect x="574" y="288" width="7" height="1.15" fill="#000"/><rect x="586" y="288" width="7" height="1.15" fill="#000"/><rect x="598" y="288" width="7" height="1.15" fill="#000"/><rect x="610" y="288" width="7" height="1.15" fill="#000"/><rect x="622" y="288" width="7" height="1.15" fill="#000"/><rect x="574" y="294" width="7" height="1.15" fill="#000"/><rect x="586" y="294" width="7" height="1.15" fill="#000"/><rect x="598" y="294" width="7" height="1.15" fill="#000"/><rect x="610" y="294" width="7" height="1.15" fill="#000"/><rect x="622" y="294" width="7" height="1.15" fill="#000"/><rect x="574" y="300" width="7" height="1.15" fill="#000"/><rect x="586" y="300" width="7" height="1.15" fill="#000"/><rect x="598" y="300" width="7" height="1.15" fill="#000"/><rect x="610" y="300" width="7" height="1.15" fill="#000"/><rect x="622" y="300" width="7" height="1.15" fill="#000"/><rect x="574" y="306" width="7" height="1.15" fill="#000"/><rect x="586" y="306" width="7" height="1.15" fill="#000"/><rect x="598" y="306" width="7" height="1.15" fill="#000"/><rect x="610" y="306" width="7" height="1.15" fill="#000"/><rect x="622" y="306" width="7" height="1.15" fill="#000"/><rect x="574" y="312" width="7" height="1.15" fill="#000"/><rect x="586" y="312" width="7" height="1.15" fill="#000"/><rect x="598" y="312" width="7" height="1.15" fill="#000"/><rect x="610" y="312" width="7" height="1.15" fill="#000"/><rect x="622" y="312" width="7" height="1.15" fill="#000"/><rect x="574" y="318" width="7" height="1.15" fill="#000"/><rect x="586" y="318" width="7" height="1.15" fill="#000"/><rect x="598" y="318" width="7" height="1.15" fill="#000"/><rect x="610" y="318" width="7" height="1.15" fill="#000"/><rect x="622" y="318" width="7" height="1.15" fill="#000"/><rect x="574" y="324" width="7" height="1.15" fill="#000"/><rect x="586" y="324" width="7" height="1.15" fill="#000"/><rect x="598" y="324" width="7" height="1.15" fill="#000"/><rect x="610" y="324" width="7" height="1.15" fill="#000"/><rect x="622" y="324" width="7" height="1.15" fill="#000"/><rect x="574" y="330" width="7" height="1.15" fill="#000"/><rect x="586" y="330" width="7" height="1.15" fill="#000"/><rect x="598" y="330" width="7" height="1.15" fill="#000"/><rect x="610" y="330" width="7" height="1.15" fill="#000"/><rect x="622" y="330" width="7" height="1.15" fill="#000"/><rect x="636.5" y="281.5" width="70" height="56" fill="#d4d4d4" stroke="#8c8c8c" stroke-width="1"/><rect x="640" y="285" width="61" height="49" fill="#fff"/><rect x="640" y="285" width="61" height="6" fill="#dae3f3"/><rect x="640" y="327" width="61" height="7" fill="#dae3f3"/><rect x="640" y="291" width="61" height="1" fill="#8eaadb"/><rect x="640" y="327" width="61" height="1" fill="#8eaadb"/><rect x="640" y="297" width="61" height="1" fill="#8eaadb"/><rect x="640" y="315" width="61" height="1" fill="#8eaadb"/><rect x="643" y="288" width="7" height="1.15" fill="#000"/><rect x="655" y="288" width="7" height="1.15" fill="#000"/><rect x="667" y="288" width="7" height="1.15" fill="#000"/><rect x="679" y="288" width="7" height="1.15" fill="#000"/><rect x="691" y="288" width="7" height="1.15" fill="#000"/><rect x="643" y="294" width="7" height="1.15" fill="#000"/><rect x="655" y="294" width="7" height="1.15" fill="#000"/><rect x="667" y="294" width="7" height="1.15" fill="#000"/><rect x="679" y="294" width="7" height="1.15" fill="#000"/><rect x="691" y="294" width="7" height="1.15" fill="#000"/><rect x="643" y="300" width="7" height="1.15" fill="#000"/><rect x="655" y="300" width="7" height="1.15" fill="#000"/><rect x="667" y="300" width="7" height="1.15" fill="#000"/><rect x="679" y="300" width="7" height="1.15" fill="#000"/><rect x="691" y="300" width="7" height="1.15" fill="#000"/><rect x="643" y="306" width="7" height="1.15" fill="#000"/><rect x="655" y="306" width="7" height="1.15" fill="#000"/><rect x="667" y="306" width="7" height="1.15" fill="#000"/><rect x="679" y="306" width="7" height="1.15" fill="#000"/><rect x="691" y="306" width="7" height="1.15" fill="#000"/><rect x="643" y="312" width="7" height="1.15" fill="#000"/><rect x="655" y="312" width="7" height="1.15" fill="#000"/><rect x="667" y="312" width="7" height="1.15" fill="#000"/><rect x="679" y="312" width="7" height="1.15" fill="#000"/><rect x="691" y="312" width="7" height="1.15" fill="#000"/><rect x="643" y="318" width="7" height="1.15" fill="#000"/><rect x="655" y="318" width="7" height="1.15" fill="#000"/><rect x="667" y="318" width="7" height="1.15" fill="#000"/><rect x="679" y="318" width="7" height="1.15" fill="#000"/><rect x="691" y="318" width="7" height="1.15" fill="#000"/><rect x="643" y="324" width="7" height="1.15" fill="#000"/><rect x="655" y="324" width="7" height="1.15" fill="#000"/><rect x="667" y="324" width="7" height="1.15" fill="#000"/><rect x="679" y="324" width="7" height="1.15" fill="#000"/><rect x="691" y="324" width="7" height="1.15" fill="#000"/><rect x="643" y="330" width="7" height="1.15" fill="#000"/><rect x="655" y="330" width="7" height="1.15" fill="#000"/><rect x="667" y="330" width="7" height="1.15" fill="#000"/><rect x="679" y="330" width="7" height="1.15" fill="#000"/><rect x="691" y="330" width="7" height="1.15" fill="#000"/><rect x="502" y="342" width="61" height="6" fill="#fbe5d6"/><rect x="502" y="384" width="61" height="7" fill="#fbe5d6"/><rect x="502" y="348" width="61" height="1" fill="#f6b688"/><rect x="502" y="384" width="61" height="1" fill="#f6b688"/><rect x="502" y="354" width="61" height="1" fill="#f6b688"/><rect x="502" y="372" width="61" height="1" fill="#f6b688"/><rect x="505" y="345" width="7" height="1.15" fill="#000"/><rect x="517" y="345" width="7" height="1.15" fill="#000"/><rect x="529" y="345" width="7" height="1.15" fill="#000"/><rect x="541" y="345" width="7" height="1.15" fill="#000"/><rect x="553" y="345" width="7" height="1.15" fill="#000"/><rect x="505" y="351" width="7" height="1.15" fill="#000"/><rect x="517" y="351" width="7" height="1.15" fill="#000"/><rect x="529" y="351" width="7" height="1.15" fill="#000"/><rect x="541" y="351" width="7" height="1.15" fill="#000"/><rect x="553" y="351" width="7" height="1.15" fill="#000"/><rect x="505" y="357" width="7" height="1.15" fill="#000"/><rect x="517" y="357" width="7" height="1.15" fill="#000"/><rect x="529" y="357" width="7" height="1.15" fill="#000"/><rect x="541" y="357" width="7" height="1.15" fill="#000"/><rect x="553" y="357" width="7" height="1.15" fill="#000"/><rect x="505" y="363" width="7" height="1.15" fill="#000"/><rect x="517" y="363" width="7" height="1.15" fill="#000"/><rect x="529" y="363" width="7" height="1.15" fill="#000"/><rect x="541" y="363" width="7" height="1.15" fill="#000"/><rect x="553" y="363" width="7" height="1.15" fill="#000"/><rect x="505" y="369" width="7" height="1.15" fill="#000"/><rect x="517" y="369" width="7" height="1.15" fill="#000"/><rect x="529" y="369" width="7" height="1.15" fill="#000"/><rect x="541" y="369" width="7" height="1.15" fill="#000"/><rect x="553" y="369" width="7" height="1.15" fill="#000"/><rect x="505" y="375" width="7" height="1.15" fill="#000"/><rect x="517" y="375" width="7" height="1.15" fill="#000"/><rect x="529" y="375" width="7" height="1.15" fill="#000"/><rect x="541" y="375" width="7" height="1.15" fill="#000"/><rect x="553" y="375" width="7" height="1.15" fill="#000"/><rect x="505" y="381" width="7" height="1.15" fill="#000"/><rect x="517" y="381" width="7" height="1.15" fill="#000"/><rect x="529" y="381" width="7" height="1.15" fill="#000"/><rect x="541" y="381" width="7" height="1.15" fill="#000"/><rect x="553" y="381" width="7" height="1.15" fill="#000"/><rect x="505" y="387" width="7" height="1.15" fill="#000"/><rect x="517" y="387" width="7" height="1.15" fill="#000"/><rect x="529" y="387" width="7" height="1.15" fill="#000"/><rect x="541" y="387" width="7" height="1.15" fill="#000"/><rect x="553" y="387" width="7" height="1.15" fill="#000"/><rect x="571.5" y="342.5" width="60" height="48" fill="none" stroke="#808080" stroke-width="1"/><rect x="583" y="342" width="1" height="49" fill="#808080"/><rect x="595" y="342" width="1" height="49" fill="#808080"/><rect x="607" y="342" width="1" height="49" fill="#808080"/><rect x="619" y="342" width="1" height="49" fill="#808080"/><rect x="571" y="348" width="61" height="1" fill="#808080"/><rect x="571" y="384" width="61" height="1" fill="#808080"/><rect x="574" y="345" width="7" height="1.15" fill="#000"/><rect x="586" y="345" width="7" height="1.15" fill="#000"/><rect x="598" y="345" width="7" height="1.15" fill="#000"/><rect x="610" y="345" width="7" height="1.15" fill="#000"/><rect x="622" y="345" width="7" height="1.15" fill="#000"/><rect x="574" y="351" width="7" height="1.15" fill="#000"/><rect x="586" y="351" width="7" height="1.15" fill="#000"/><rect x="598" y="351" width="7" height="1.15" fill="#000"/><rect x="610" y="351" width="7" height="1.15" fill="#000"/><rect x="622" y="351" width="7" height="1.15" fill="#000"/><rect x="574" y="357" width="7" height="1.15" fill="#000"/><rect x="586" y="357" width="7" height="1.15" fill="#000"/><rect x="598" y="357" width="7" height="1.15" fill="#000"/><rect x="610" y="357" width="7" height="1.15" fill="#000"/><rect x="622" y="357" width="7" height="1.15" fill="#000"/><rect x="574" y="363" width="7" height="1.15" fill="#000"/><rect x="586" y="363" width="7" height="1.15" fill="#000"/><rect x="598" y="363" width="7" height="1.15" fill="#000"/><rect x="610" y="363" width="7" height="1.15" fill="#000"/><rect x="622" y="363" width="7" height="1.15" fill="#000"/><rect x="574" y="369" width="7" height="1.15" fill="#000"/><rect x="586" y="369" width="7" height="1.15" fill="#000"/><rect x="598" y="369" width="7" height="1.15" fill="#000"/><rect x="610" y="369" width="7" height="1.15" fill="#000"/><rect x="622" y="369" width="7" height="1.15" fill="#000"/><rect x="574" y="375" width="7" height="1.15" fill="#000"/><rect x="586" y="375" width="7" height="1.15" fill="#000"/><rect x="598" y="375" width="7" height="1.15" fill="#000"/><rect x="610" y="375" width="7" height="1.15" fill="#000"/><rect x="622" y="375" width="7" height="1.15" fill="#000"/><rect x="574" y="381" width="7" height="1.15" fill="#000"/><rect x="586" y="381" width="7" height="1.15" fill="#000"/><rect x="598" y="381" width="7" height="1.15" fill="#000"/><rect x="610" y="381" width="7" height="1.15" fill="#000"/><rect x="622" y="381" width="7" height="1.15" fill="#000"/><rect x="574" y="387" width="7" height="1.15" fill="#000"/><rect x="586" y="387" width="7" height="1.15" fill="#000"/><rect x="598" y="387" width="7" height="1.15" fill="#000"/><rect x="610" y="387" width="7" height="1.15" fill="#000"/><rect x="622" y="387" width="7" height="1.15" fill="#000"/><rect x="640.5" y="342.5" width="60" height="48" fill="none" stroke="#4a78c4" stroke-width="1"/><rect x="652" y="342" width="1" height="49" fill="#4a78c4"/><rect x="664" y="342" width="1" height="49" fill="#4a78c4"/><rect x="676" y="342" width="1" height="49" fill="#4a78c4"/><rect x="688" y="342" width="1" height="49" fill="#4a78c4"/><rect x="640" y="348" width="61" height="1" fill="#4a78c4"/><rect x="640" y="384" width="61" height="1" fill="#4a78c4"/><rect x="643" y="345" width="7" height="1.15" fill="#2f5a9a"/><rect x="655" y="345" width="7" height="1.15" fill="#2f5a9a"/><rect x="667" y="345" width="7" height="1.15" fill="#2f5a9a"/><rect x="679" y="345" width="7" height="1.15" fill="#2f5a9a"/><rect x="691" y="345" width="7" height="1.15" fill="#2f5a9a"/><rect x="643" y="351" width="7" height="1.15" fill="#2f5a9a"/><rect x="655" y="351" width="7" height="1.15" fill="#2f5a9a"/><rect x="667" y="351" width="7" height="1.15" fill="#2f5a9a"/><rect x="679" y="351" width="7" height="1.15" fill="#2f5a9a"/><rect x="691" y="351" width="7" height="1.15" fill="#2f5a9a"/><rect x="643" y="357" width="7" height="1.15" fill="#2f5a9a"/><rect x="655" y="357" width="7" height="1.15" fill="#2f5a9a"/><rect x="667" y="357" width="7" height="1.15" fill="#2f5a9a"/><rect x="679" y="357" width="7" height="1.15" fill="#2f5a9a"/><rect x="691" y="357" width="7" height="1.15" fill="#2f5a9a"/><rect x="643" y="363" width="7" height="1.15" fill="#2f5a9a"/><rect x="655" y="363" width="7" height="1.15" fill="#2f5a9a"/><rect x="667" y="363" width="7" height="1.15" fill="#2f5a9a"/><rect x="679" y="363" width="7" height="1.15" fill="#2f5a9a"/><rect x="691" y="363" width="7" height="1.15" fill="#2f5a9a"/><rect x="643" y="369" width="7" height="1.15" fill="#2f5a9a"/><rect x="655" y="369" width="7" height="1.15" fill="#2f5a9a"/><rect x="667" y="369" width="7" height="1.15" fill="#2f5a9a"/><rect x="679" y="369" width="7" height="1.15" fill="#2f5a9a"/><rect x="691" y="369" width="7" height="1.15" fill="#2f5a9a"/><rect x="643" y="375" width="7" height="1.15" fill="#2f5a9a"/><rect x="655" y="375" width="7" height="1.15" fill="#2f5a9a"/><rect x="667" y="375" width="7" height="1.15" fill="#2f5a9a"/><rect x="679" y="375" width="7" height="1.15" fill="#2f5a9a"/><rect x="691" y="375" width="7" height="1.15" fill="#2f5a9a"/><rect x="643" y="381" width="7" height="1.15" fill="#2f5a9a"/><rect x="655" y="381" width="7" height="1.15" fill="#2f5a9a"/><rect x="667" y="381" width="7" height="1.15" fill="#2f5a9a"/><rect x="679" y="381" width="7" height="1.15" fill="#2f5a9a"/><rect x="691" y="381" width="7" height="1.15" fill="#2f5a9a"/><rect x="643" y="387" width="7" height="1.15" fill="#2f5a9a"/><rect x="655" y="387" width="7" height="1.15" fill="#2f5a9a"/><rect x="667" y="387" width="7" height="1.15" fill="#2f5a9a"/><rect x="679" y="387" width="7" height="1.15" fill="#2f5a9a"/><rect x="691" y="387" width="7" height="1.15" fill="#2f5a9a"/><rect x="502.5" y="399.5" width="60" height="48" fill="none" stroke="#f39a50" stroke-width="1"/><rect x="514" y="399" width="1" height="49" fill="#f39a50"/><rect x="526" y="399" width="1" height="49" fill="#f39a50"/><rect x="538" y="399" width="1" height="49" fill="#f39a50"/><rect x="550" y="399" width="1" height="49" fill="#f39a50"/><rect x="502" y="405" width="61" height="1" fill="#f39a50"/><rect x="502" y="441" width="61" height="1" fill="#f39a50"/><rect x="505" y="402" width="7" height="1.15" fill="#df6c16"/><rect x="517" y="402" width="7" height="1.15" fill="#df6c16"/><rect x="529" y="402" width="7" height="1.15" fill="#df6c16"/><rect x="541" y="402" width="7" height="1.15" fill="#df6c16"/><rect x="553" y="402" width="7" height="1.15" fill="#df6c16"/><rect x="505" y="408" width="7" height="1.15" fill="#df6c16"/><rect x="517" y="408" width="7" height="1.15" fill="#df6c16"/><rect x="529" y="408" width="7" height="1.15" fill="#df6c16"/><rect x="541" y="408" width="7" height="1.15" fill="#df6c16"/><rect x="553" y="408" width="7" height="1.15" fill="#df6c16"/><rect x="505" y="414" width="7" height="1.15" fill="#df6c16"/><rect x="517" y="414" width="7" height="1.15" fill="#df6c16"/><rect x="529" y="414" width="7" height="1.15" fill="#df6c16"/><rect x="541" y="414" width="7" height="1.15" fill="#df6c16"/><rect x="553" y="414" width="7" height="1.15" fill="#df6c16"/><rect x="505" y="420" width="7" height="1.15" fill="#df6c16"/><rect x="517" y="420" width="7" height="1.15" fill="#df6c16"/><rect x="529" y="420" width="7" height="1.15" fill="#df6c16"/><rect x="541" y="420" width="7" height="1.15" fill="#df6c16"/><rect x="553" y="420" width="7" height="1.15" fill="#df6c16"/><rect x="505" y="426" width="7" height="1.15" fill="#df6c16"/><rect x="517" y="426" width="7" height="1.15" fill="#df6c16"/><rect x="529" y="426" width="7" height="1.15" fill="#df6c16"/><rect x="541" y="426" width="7" height="1.15" fill="#df6c16"/><rect x="553" y="426" width="7" height="1.15" fill="#df6c16"/><rect x="505" y="432" width="7" height="1.15" fill="#df6c16"/><rect x="517" y="432" width="7" height="1.15" fill="#df6c16"/><rect x="529" y="432" width="7" height="1.15" fill="#df6c16"/><rect x="541" y="432" width="7" height="1.15" fill="#df6c16"/><rect x="553" y="432" width="7" height="1.15" fill="#df6c16"/><rect x="505" y="438" width="7" height="1.15" fill="#df6c16"/><rect x="517" y="438" width="7" height="1.15" fill="#df6c16"/><rect x="529" y="438" width="7" height="1.15" fill="#df6c16"/><rect x="541" y="438" width="7" height="1.15" fill="#df6c16"/><rect x="553" y="438" width="7" height="1.15" fill="#df6c16"/><rect x="505" y="444" width="7" height="1.15" fill="#df6c16"/><rect x="517" y="444" width="7" height="1.15" fill="#df6c16"/><rect x="529" y="444" width="7" height="1.15" fill="#df6c16"/><rect x="541" y="444" width="7" height="1.15" fill="#df6c16"/><rect x="553" y="444" width="7" height="1.15" fill="#df6c16"/><defs><filter id="sh" x="-20%" y="-20%" width="140%" height="140%"><feGaussianBlur in="SourceAlpha" stdDeviation="2.2"/><feOffset dx="1.5" dy="3" result="b"/><feComponentTransfer><feFuncA type="linear" slope="0.5"/></feComponentTransfer><feMerge><feMergeNode/><feMergeNode in="SourceGraphic"/></feMerge></filter><filter id="sh2" x="-20%" y="-50%" width="140%" height="200%"><feGaussianBlur in="SourceAlpha" stdDeviation="2.8"/><feOffset dx="1" dy="3.5" result="b"/><feComponentTransfer><feFuncA type="linear" slope="0.55"/></feComponentTransfer><feMerge><feMergeNode/><feMergeNode in="SourceGraphic"/></feMerge></filter></defs><g filter="url(#sh)"><rect x="491.5" y="35.5" width="93" height="100" fill="none" stroke="#f83c3c" stroke-width="3"/></g><g filter="url(#sh2)"><line x1="484.5" y1="142" x2="272" y2="214" stroke="#f83c3c" stroke-width="4.3" stroke-linecap="round"/><polygon points="263,216.5 272.6,207.3 276.3,219.2" fill="#f83c3c"/></g></svg>
</body></html>
